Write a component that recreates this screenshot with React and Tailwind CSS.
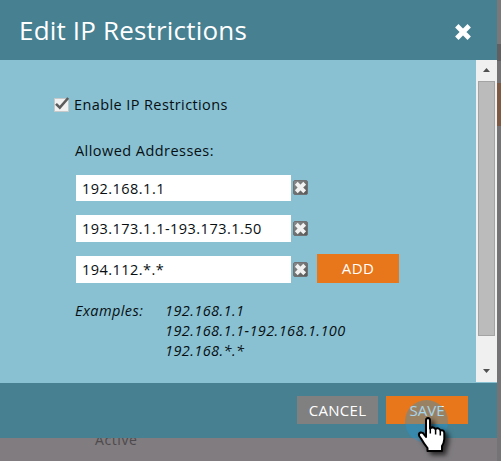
const ADDRESSES = [
  { value: '192.168.1.1', box: 'h-[26px] mb-[14px]', icon: 'mt-[5px]' },
  { value: '193.173.1.1-193.173.1.50', box: 'h-[27px] mb-[14px]', icon: 'mt-[6px]' },
  { value: '194.112.*.*', box: 'h-[27px]', icon: 'mt-[6px]' },
];

function RemoveIcon({ className }) {
  return (
    <svg className={className} width="15" height="15" viewBox="0 0 15 15">
      <defs>
        <linearGradient id="remove" x1="0" y1="0" x2="1" y2="1">
          <stop offset="0" stopColor="#8b8d8e" />
          <stop offset="1" stopColor="#555555" />
        </linearGradient>
      </defs>
      <rect x="0.5" y="0.5" width="14" height="14" rx="1.5" fill="url(#remove)" stroke="#6f7173" />
      <path d="M4.7 4.7L10.3 10.3M10.3 4.7L4.7 10.3" stroke="#f1f1f1" strokeWidth="4" strokeLinecap="square" />
    </svg>
  );
}

function Checkbox() {
  return (
    <svg className="shrink-0" width="16" height="16" viewBox="0 0 16 16">
      <rect x="0.5" y="1.5" width="14" height="13" fill="#f1f1f1" stroke="#c6c9ca" />
      <path d="M2 6.8L5.800 10.600L14.200 1" fill="none" stroke="#5c5c5c" strokeWidth="2.600" />
    </svg>
  );
}

function HandCursor() {
  return (
    <svg className="absolute left-[400px] top-[395px]" width="70" height="66" viewBox="400 395 70 66">
      <defs>
        <filter id="shadow" x="-50%" y="-50%" width="200%" height="200%">
          <feDropShadow dx="3.5" dy="3" stdDeviation="2.5" floodColor="#000" floodOpacity="0.7" />
        </filter>
      </defs>
      <circle cx="426.5" cy="421.5" r="21.5" fill="#2496d4" fillOpacity="0.4" />
      <path
        filter="url(#shadow)"
        d="M426 420.5Q426 418 428 418T430 420.5V428.5Q433 426 435.5 429Q438.500 427 440.500 430.500Q444 429.500 444.300 433V439Q444 443 442 446V451H427.500V448Q423.500 443 421 438.500L419.200 436Q418.200 433.500 420.500 432.500Q423 432 424.500 435L426 437Z"
        fill="#fff" stroke="#000" strokeWidth="2" strokeLinejoin="round"
      />
      <path d="M430.300 428V433.500M435.600 429V434.500M440.300 431V435.500" stroke="#000" strokeWidth="1.5" />
    </svg>
  );
}

function Scrollbar() {
  return (
    <div className="flex h-[322px] w-[21px] flex-col items-center bg-[#f0f0f0]">
      <svg className="shrink-0" width="21" height="21" viewBox="0 0 21 21">
        <path d="M7 12L10.500 8L14 12Z" fill="#505050" />
      </svg>
      <div className="h-[255px] w-[17px] shrink-0 border border-[#a3a3a3] bg-[#bbb]" />
      <div className="grow" />
      <svg className="shrink-0" width="21" height="21" viewBox="0 0 21 21">
        <path d="M7 8L10.500 12L14 8Z" fill="#505050" />
      </svg>
    </div>
  );
}

export default function App() {
  return (
    <div className="relative flex h-[461px] w-[501px] overflow-hidden bg-[#807c7f] font-['Open_Sans',sans-serif] text-[15px] leading-5 text-[#080f12]">
      <div className="flex w-[497px] shrink-0 flex-col">
        <header className="flex h-[60px] shrink-0 items-center justify-between bg-[#468091] pl-[19px] pr-[25px]">
          <h1 className="whitespace-nowrap text-[26px] leading-[60px] tracking-[0.18px] text-white">Edit IP Restrictions</h1>
          <svg className="mt-1" width="18" height="18" viewBox="0 0 18 18">
            <path d="M4.500 4.500L13.500 13.500M13.500 4.500L4.500 13.500" stroke="#fff" strokeWidth="4.800" strokeLinecap="square" />
          </svg>
        </header>
        <main className="flex h-[323px] shrink-0 justify-between bg-[#89c1d3]">
          <div className="pl-[54px] pt-[35px]">
            <div className="flex h-5 items-center gap-1">
              <Checkbox />
              <span className="whitespace-nowrap text-[14.5px] tracking-[0.4px]">Enable IP Restrictions</span>
            </div>
            <div className="mt-[26px] h-5 pl-[21px] text-[14.5px] tracking-[0.45px]">Allowed Addresses:</div>
            <div className="mt-[14px] flex pl-[22px]">
              <div>
                {ADDRESSES.map((a) => (
                  <div key={a.value} className={`flex gap-[2px] ${a.box}`}>
                    <div className="flex w-[215px] items-center bg-white pl-[6px] pt-px text-[14.5px] tracking-[0.47px]">{a.value}</div>
                    <RemoveIcon className={a.icon} />
                  </div>
                ))}
              </div>
              <button className="ml-[9px] h-[29px] w-[82px] self-end bg-[#e8761a] pb-[2px] text-[15px] tracking-[0.4px] text-white">ADD</button>
            </div>
            <div className="mt-[18px] flex pl-[21px] text-[14.5px] italic tracking-[0.42px]">
              <div className="w-[90px]">Examples:</div>
              <div>
                <div>192.168.1.1</div>
                <div>192.168.1.1-192.168.1.100</div>
                <div>192.168.*.*</div>
              </div>
            </div>
          </div>
          <Scrollbar />
        </main>
        <footer className="flex h-[55px] shrink-0 justify-end gap-2 bg-[#468091] pr-[29px] pt-[13px]">
          <button className="h-7 w-[81px] bg-[#808080] pb-px text-[15px] tracking-[0.3px] text-white">CANCEL</button>
          <button className="h-7 w-[82px] bg-[#e8761a] pb-px text-[15px] text-white">SAVE</button>
        </footer>
        <div className="h-[23px] overflow-hidden pl-[95px] text-[14px] tracking-[0.6px] text-[#4d4a4d]">
          <div className="-mt-2">Active</div>
        </div>
      </div>
      <div className="flex w-1 flex-col bg-[#767376]">
        <div className="h-11 bg-[#7b787b]" />
        <div className="h-[17px] bg-[#625f63]" />
        <div className="h-[22px] bg-[#757275]" />
        <div className="h-[43px] bg-[#7e5944]" />
      </div>
      <HandCursor />
    </div>
  );
}
